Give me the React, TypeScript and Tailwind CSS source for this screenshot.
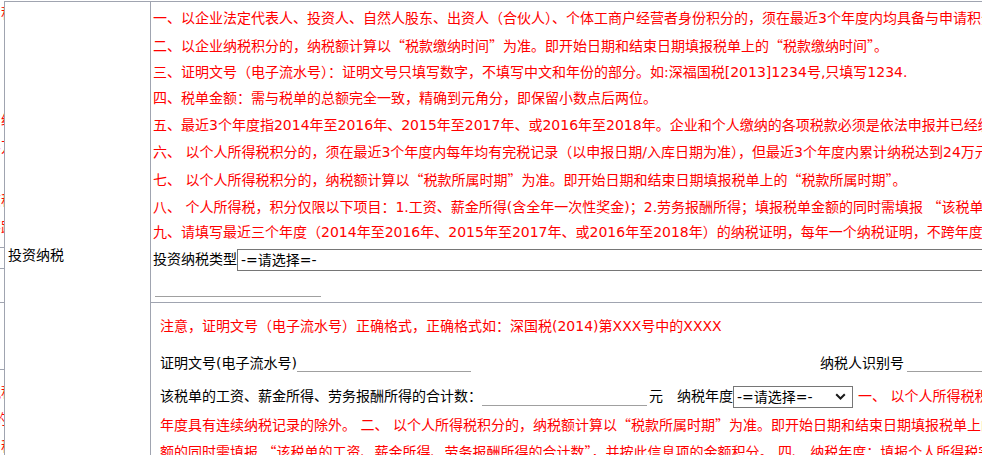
import type { ReactNode } from "react";

const red = "text-[#ff0000]";

const topNotes = [
  "一、以企业法定代表人、投资人、自然人股东、出资人（合伙人）、个体工商户经营者身份积分的，须在最近3个年度内均具备与申请积分相同的身份。",
  "二、以企业纳税积分的，纳税额计算以“税款缴纳时间”为准。即开始日期和结束日期填报税单上的“税款缴纳时间”。",
  "三、证明文号（电子流水号）：证明文号只填写数字，不填写中文和年份的部分。如:深福国税[2013]1234号,只填写1234.",
  "四、税单金额：需与税单的总额完全一致，精确到元角分，即保留小数点后两位。",
  "五、最近3个年度指2014年至2016年、2015年至2017年、或2016年至2018年。企业和个人缴纳的各项税款必须是依法申报并已经缴纳入库的税款。",
  "六、 以个人所得税积分的，须在最近3个年度内每年均有完税记录（以申报日期/入库日期为准），但最近3个年度内累计纳税达到24万元以上的除外。",
  "七、 以个人所得税积分的，纳税额计算以“税款所属时期”为准。即开始日期和结束日期填报税单上的“税款所属时期”。",
  "八、 个人所得税，积分仅限以下项目：1.工资、薪金所得(含全年一次性奖金)；2.劳务报酬所得；填报税单金额的同时需填报 “该税单的工资、薪金所得、劳务报酬所得的合计数”。",
  "九、请填写最近三个年度（2014年至2016年、2015年至2017年、或2016年至2018年）的纳税证明，每年一个纳税证明，不跨年度填写。",
];

// curly quotes render full width in the CJK face
function fmt(text: string): ReactNode[] {
  return text.split(/([“”])/).map((part, i) =>
    part === "“" || part === "”" ? (
      <span key={i} className="font-['Noto_Sans_CJK_SC',sans-serif]">
        {part}
      </span>
    ) : (
      part
    )
  );
}

function FakeSelect({ width, arrow }: { width: string; arrow?: boolean }) {
  return (
    <div
      className={`${width} h-[22px] shrink-0 flex items-center justify-between border border-[#767676] bg-white pl-[3px] pr-[6px] text-black`}
    >
      <span className="whitespace-nowrap leading-none">-=请选择=-</span>
      {arrow && (
        <svg width="11" height="7" viewBox="0 0 11 7" className="shrink-0">
          <path d="M1.2 1.2l4.3 4.3 4.3-4.3" fill="none" stroke="#1a1a1a" strokeWidth="2" />
        </svg>
      )}
    </div>
  );
}

function Underline({ width }: { width: string }) {
  return <div className={`${width} h-[18px] shrink-0 border-b border-[#a0a0a0]`} />;
}

// tail of the column to the left, clipped by the viewport
const sliverRows: (string | null)[] = ["积", null, null, null, "经", "24万", null, "该税", "不跨"];

function Tail({ text, h }: { text: string | null; h: string }) {
  return (
    <div className={`${h} flex justify-end items-center`}>
      {text && <span className={`whitespace-nowrap ${red} -mr-[11px]`}>{text}</span>}
    </div>
  );
}

function LeftSliver() {
  return (
    <div className="w-[4px] shrink-0 overflow-hidden flex flex-col">
      {sliverRows.map((t, i) => (
        <Tail key={i} text={t} h="h-[26.8px]" />
      ))}
      <div className="mt-[6px] border-t border-[#a0a4b0]" />
      <div className="mt-[20px] border-t border-[#a0a4b0]" />
      <div className="mt-[33px] border-t border-[#a0a4b0]" />
      <div className="mt-[66px] border-t border-[#a0a4b0]" />
      <div className="mt-[9px]">
        <Tail text="税积" h="h-[27px]" />
        <Tail text="的“" h="h-[27px]" />
        <Tail text="税" h="h-[27px]" />
      </div>
    </div>
  );
}

export default function App() {
  return (
    <div className="w-[982px] h-[455px] overflow-hidden bg-white text-[14px] text-black font-['DejaVu_Sans','Noto_Sans_CJK_SC',sans-serif]">
      <div className="flex">
        <LeftSliver />
        <div className="mt-[1px] flex flex-1 min-w-0 border-l border-t border-[#a0a4b0]">
          <div className="w-[145px] h-[506px] shrink-0 flex items-center pl-[3px]">投资纳税</div>

          <div className="flex-1 min-w-0 border-l border-[#a0a4b0]">
            <div className="h-[300px] pl-[2px] pt-[3px]">
              {topNotes.map((n) => (
                <div key={n} className={`h-[26.8px] leading-[26.8px] whitespace-nowrap ${red}`}>
                  {fmt(n)}
                </div>
              ))}
              <div className="h-[26.8px] flex items-center whitespace-nowrap">
                <span>投资纳税类型</span>
                <FakeSelect width="w-[800px]" />
              </div>
              <div className="ml-[2px] mt-[4px] w-[166px] h-[20px] border-b border-[#a0a0a0]" />
            </div>

            <div className="border-t border-[#a0a4b0] pl-[9px] pt-[10px]">
              <div className={`h-[27px] leading-[27px] whitespace-nowrap ${red}`}>
                注意，证明文号（电子流水号）正确格式，正确格式如：深国税(2014)第XXX号中的XXXX
              </div>

              <div className="mt-[10px] h-[27px] flex items-center whitespace-nowrap">
                <div className="w-[660px] shrink-0 flex items-center">
                  <span>证明文号(电子流水号)</span>
                  <div className="w-[174px] h-[16px] border-b border-[#a0a0a0]" />
                </div>
                <span>纳税人识别号</span>
                <div className="ml-[3px] w-[200px] h-[16px] shrink-0 border-b border-[#a0a0a0]" />
              </div>

              <div className="mt-[6px] h-[27px] flex items-center whitespace-nowrap">
                <span>该税单的工资、薪金所得、劳务报酬所得的合计数：</span>
                <Underline width="w-[165px]" />
                <span className="ml-[2px]">元</span>
                <span className="ml-[14px]">纳税年度</span>
                <FakeSelect width="w-[120px]" arrow />
                <span className={`ml-[5px] ${red}`}>
                  一、 以个人所得税积分的，须在最近3个年度内每年均有完税记录（以申报日期/入库日期为准），但最近3个
                </span>
              </div>

              <div className={`mt-[1px] h-[27px] leading-[27px] whitespace-nowrap ${red}`}>
                {fmt(
                  "年度具有连续纳税记录的除外。 二、 以个人所得税积分的，纳税额计算以“税款所属时期”为准。即开始日期和结束日期填报税单上的“税款所属时期”。 三、 个人所得税，积分仅限以下项目：1.工资、薪金所得(含全年一次性奖金)；2.劳务报酬所得；填报税单金"
                )}
              </div>
              <div className={`h-[27px] leading-[27px] whitespace-nowrap ${red}`}>
                {fmt(
                  "额的同时需填报 “该税单的工资、薪金所得、劳务报酬所得的合计数”，并按此信息项的金额积分。 四、 纳税年度：填报个人所得税完税证明上的年度。"
                )}
              </div>
            </div>
          </div>
        </div>
      </div>
    </div>
  );
}
